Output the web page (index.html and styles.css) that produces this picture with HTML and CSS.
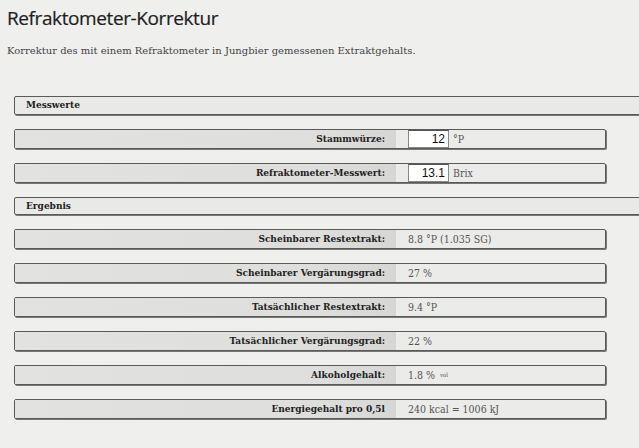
FILE: index.html
```html
<!DOCTYPE html>
<html lang="de">
<head>
<meta charset="utf-8">
<title>Refraktometer-Korrektur</title>
<link rel="stylesheet" href="styles.css">
</head>
<body>
<h1 class="title">Refraktometer-Korrektur</h1>
<p class="intro">Korrektur des mit einem Refraktometer in Jungbier gemessenen Extraktgehalts.</p>
<div class="form">
  <div class="section">Messwerte</div>
  <div class="row">
    <div class="label">Stammwürze:</div>
    <div class="value"><span class="input">12</span><span class="unit">°P</span></div>
  </div>
  <div class="row">
    <div class="label">Refraktometer-Messwert:</div>
    <div class="value"><span class="input">13.1</span><span class="unit">Brix</span></div>
  </div>
  <div class="section">Ergebnis</div>
  <div class="row">
    <div class="label">Scheinbarer Restextrakt:</div>
    <div class="value">8.8 °P (1.035 SG)</div>
  </div>
  <div class="row">
    <div class="label">Scheinbarer Vergärungsgrad:</div>
    <div class="value">27 %</div>
  </div>
  <div class="row">
    <div class="label">Tatsächlicher Restextrakt:</div>
    <div class="value">9.4 °P</div>
  </div>
  <div class="row">
    <div class="label">Tatsächlicher Vergärungsgrad:</div>
    <div class="value">22 %</div>
  </div>
  <div class="row">
    <div class="label">Alkoholgehalt:</div>
    <div class="value">1.8 %<sub class="sub">vol</sub></div>
  </div>
  <div class="row">
    <div class="label">Energiegehalt pro 0,5l</div>
    <div class="value">240 kcal = 1006 kJ</div>
  </div>
</div>
</body>
</html>
```
FILE: styles.css
```css
html, body {
  margin: 0;
  padding: 0;
}
body {
  background: #efefee;
  color: #333;
  font-family: "DejaVu Serif Condensed", "DejaVu Serif", serif;
  overflow: hidden;
  width: 639px;
  height: 448px;
}
.title {
  font-family: "Open Sans", "DejaVu Sans", sans-serif;
  font-weight: 400;
  font-size: 19px;
  line-height: 24px;
  color: #1e1e1e;
  margin: 6px 0 0 7px;
  letter-spacing: -0.4px;
  -webkit-text-stroke: 0.2px #1e1e1e;
}
.intro {
  font-family: "DejaVu Serif", serif;
  font-size: 10px;
  line-height: 14px;
  margin: 14px 0 0 7px;
  color: #444;
}
.form {
  margin: 38px 0 0 14px;
  display: flex;
  flex-direction: column;
  gap: 14px;
}
.section {
  width: 640px;
  height: 18.5px;
  box-sizing: border-box;
  border: 1px solid #5a5a5a;
  border-radius: 2px;
  background: #e9e9e8;
  box-shadow: 1px 1px 0 #777;
  font-weight: bold;
  font-size: 10px;
  line-height: 16px;
  padding-left: 11px;
  color: #222;
}
.row {
  width: 592px;
  height: 20px;
  box-sizing: border-box;
  border: 1px solid #5a5a5a;
  border-radius: 2px;
  box-shadow: 1px 1px 0 #777;
  display: flex;
  background: #ebebea;
}
.label {
  width: 381px;
  flex: none;
  text-align: right;
  padding-right: 11px;
  box-sizing: border-box;
  font-weight: bold;
  font-size: 10px;
  line-height: 18px;
  color: #222;
  background: linear-gradient(to right, #e2e2e1 0%, #dededd 80%, #d6d6d5 100%);
}
.value {
  padding-left: 12px;
  font-size: 10.5px;
  line-height: 18px;
  color: #555;
  display: flex;
  align-items: center;
  gap: 4px;
}
.input {
  display: inline-block;
  width: 41px;
  height: 18px;
  box-sizing: border-box;
  background: #fff;
  border: 1px solid #888;
  border-top-color: #555;
  font-family: "Liberation Sans", Arial, sans-serif;
  font-size: 12px;
  line-height: 16px;
  text-align: right;
  padding-right: 3px;
  color: #111;
}
.sub {
  font-size: 6px;
  vertical-align: -3px;
  line-height: 0;
  margin-left: 1px;
}
```
